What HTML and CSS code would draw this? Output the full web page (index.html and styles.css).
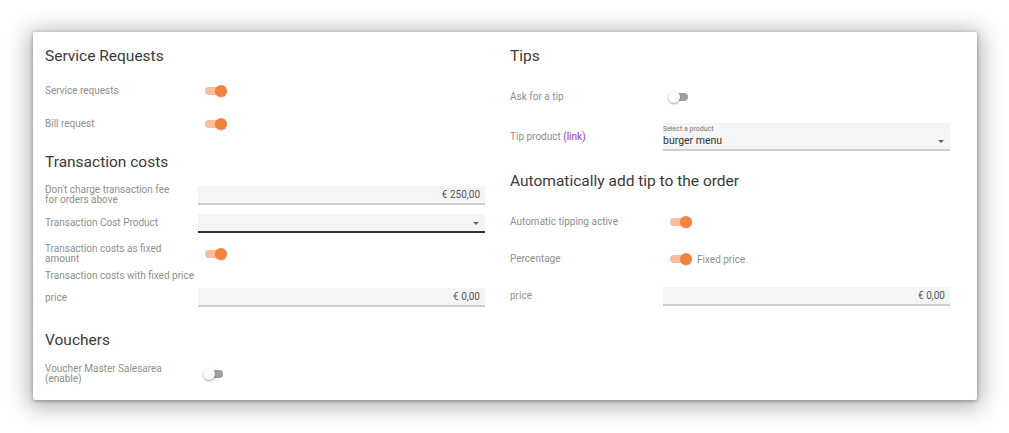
FILE: index.html
```html
<!DOCTYPE html>
<html lang="en">
<head>
  <meta charset="UTF-8">
  <meta name="viewport" content="width=device-width, initial-scale=1.0">
  <title>Settings - Service and Tips</title>
  <link rel="stylesheet" href="styles.css">
</head>
<body>
  <div class="card">
    <!-- Left column -->
    <div class="column">
      <h2>Service Requests</h2>
      <div class="row row-sr">
        <span class="label">Service requests</span>
        <span class="switch on"><span class="thumb"></span></span>
      </div>
      <div class="row row-bill">
        <span class="label">Bill request</span>
        <span class="switch on"><span class="thumb"></span></span>
      </div>

      <h2 class="h-transaction">Transaction costs</h2>
      <div class="row row-fee">
        <span class="label">Don't charge transaction fee for orders above</span>
        <div class="field">€ 250,00</div>
      </div>
      <div class="row row-product">
        <span class="label">Transaction Cost Product</span>
        <div class="field select focused"><span></span><span class="arrow"></span></div>
      </div>
      <div class="row row-fixed">
        <span class="label">Transaction costs as fixed amount</span>
        <span class="switch on"><span class="thumb"></span></span>
      </div>
      <div class="row row-note">
        <span class="label wide">Transaction costs with fixed price</span>
      </div>
      <div class="row row-price">
        <span class="label">price</span>
        <div class="field">€ 0,00</div>
      </div>

      <h2 class="h-vouchers">Vouchers</h2>
      <div class="row row-voucher">
        <span class="label">Voucher Master Salesarea (enable)</span>
        <span class="switch"><span class="thumb"></span></span>
      </div>
    </div>

    <!-- Right column -->
    <div class="column">
      <h2>Tips</h2>
      <div class="row row-ask">
        <span class="label">Ask for a tip</span>
        <span class="switch"><span class="thumb"></span></span>
      </div>
      <div class="row row-tip">
        <span class="label">Tip product <a href="#" class="link">(link)</a></span>
        <div class="field select tall">
          <div class="select-text">
            <span class="float-label">Select a product</span>
            <span class="value">burger menu</span>
          </div>
          <span class="arrow"></span>
        </div>
      </div>

      <h2 class="h-auto">Automatically add tip to the order</h2>
      <div class="row row-auto">
        <span class="label">Automatic tipping active</span>
        <span class="switch on"><span class="thumb"></span></span>
      </div>
      <div class="row row-percent">
        <span class="label">Percentage</span>
        <span class="switch on"><span class="thumb"></span></span>
        <span class="after">Fixed price</span>
      </div>
      <div class="row row-tipprice">
        <span class="label">price</span>
        <div class="field">€ 0,00</div>
      </div>
    </div>
  </div>
</body>
</html>
```

FILE: styles.css
```css
:root {
  --text: #3a3a3a;
  --text-light: #8f8f8f;
  --orange: #f5813f;
  --orange-light: #f8bd9c;
  --field-bg: #f5f5f5;
  --field-line: #cfcfcf;
}

body {
  font-family: Roboto, "Liberation Sans", Arial, sans-serif;
  color: var(--text);
  margin: 0;
  padding: 32px 32px 33px 33px;
  background: #ffffff;
}

.card {
  width: 944px;
  height: 368px;
  box-sizing: border-box;
  padding: 14px 27px 0 12px;
  background: #ffffff;
  border-radius: 2px;
  box-shadow: 0 1px 4px rgba(0, 0, 0, 0.35), 0 3px 22px 5px rgba(0, 0, 0, 0.28);
  display: flex;
  gap: 25px;
}

.column {
  width: 440px;
  display: flex;
  flex-direction: column;
}

h2 {
  font-size: 15.5px;
  font-weight: 400;
  line-height: 20px;
  height: 20px;
  margin: 0;
  color: var(--text);
}

.row {
  display: flex;
  align-items: center;
}

.label {
  width: 153px;
  flex-shrink: 0;
  font-size: 10px;
  line-height: 10px;
  color: var(--text-light);
  padding-right: 20px;
  box-sizing: border-box;
}

.label.wide {
  width: auto;
}

.link {
  color: #a033c8;
  text-decoration: none;
}

/* Left column rows */
.row-sr { margin-top: 8px; height: 33px; }
.row-bill { height: 33px; }
.h-transaction { margin-top: 12px; }
.row-fee { margin-top: 10px; height: 26px; }
.row-product { height: 30px; }
.row-fixed { height: 32px; }
.row-note { height: 12px; }
.row-price { height: 31px; }
.h-vouchers { margin-top: 17px; }
.row-voucher { margin-top: 12px; height: 24px; }

/* Right column rows */
.row-ask { margin-top: 14px; height: 34px; }
.row-tip { height: 46px; }
.h-auto { margin-top: 11px; }
.row-auto { margin-top: 14px; height: 34px; }
.row-percent { height: 40px; }
.row-tipprice { height: 34px; }

/* Fields */
.field {
  flex: 1;
  height: 19px;
  box-sizing: border-box;
  background: var(--field-bg);
  border-bottom: 2px solid var(--field-line);
  font-size: 10px;
  color: #555555;
  display: flex;
  align-items: center;
  justify-content: flex-end;
  padding-right: 5px;
}

.field.select {
  justify-content: space-between;
  padding-right: 6px;
}

.field.focused {
  border-bottom-color: #333333;
}

.field.tall {
  height: 28px;
}

.select-text {
  display: flex;
  flex-direction: column;
  justify-content: flex-end;
  height: 100%;
  padding-bottom: 2px;
  box-sizing: border-box;
}

.float-label {
  font-size: 7px;
  line-height: 9px;
  color: #777777;
}

.value {
  font-size: 10.5px;
  line-height: 13px;
  color: #333333;
}

.arrow {
  width: 0;
  height: 0;
  border-left: 3.5px solid transparent;
  border-right: 3.5px solid transparent;
  border-top: 3.5px solid #666666;
  margin-top: 2px;
}

.field.tall .arrow {
  margin-top: 10px;
}

/* Toggle switch */
.switch {
  position: relative;
  width: 18px;
  height: 8px;
  border-radius: 4px;
  margin-left: 7px;
  background: #9e9e9e;
  flex-shrink: 0;
}

.switch .thumb {
  position: absolute;
  top: -2px;
  left: -2px;
  width: 12px;
  height: 12px;
  border-radius: 50%;
  background: #fafafa;
  box-shadow: 0 1px 2px rgba(0, 0, 0, 0.35);
}

.switch.on {
  background: var(--orange-light);
}

.switch.on .thumb {
  left: 10px;
  background: var(--orange);
  box-shadow: 0 1px 1px rgba(0, 0, 0, 0.15);
}

.after {
  margin-left: 9px;
  font-size: 10px;
  color: var(--text-light);
}
```
